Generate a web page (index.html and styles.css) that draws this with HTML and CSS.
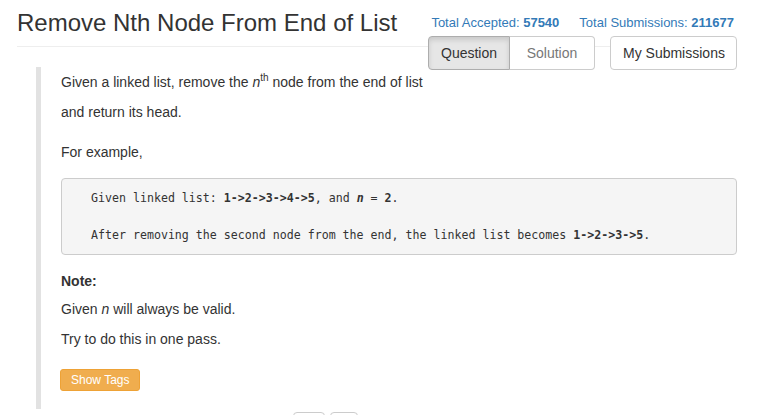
FILE: index.html
```html
<!DOCTYPE html>
<html>
<head>
<meta charset="utf-8">
<link rel="stylesheet" href="styles.css">
</head>
<body>
<div class="page">
  <header class="header">
    <h3 class="title">Remove Nth Node From End of List</h3>
    <div class="side">
      <div class="stats">
        <span class="stat">Total Accepted: <b>57540</b></span>
        <span class="stat">Total Submissions: <b>211677</b></span>
      </div>
      <div class="actions">
        <div class="btn-group">
          <span class="btn active">Question</span>
          <span class="btn muted">Solution</span>
        </div>
        <span class="btn">My Submissions</span>
      </div>
    </div>
  </header>
  <section class="question">
    <p>Given a linked list, remove the <i>n</i><sup>th</sup> node from the end of list</p>
    <p>and return its head.</p>
    <p class="gap">For example,</p>
<pre class="code">Given linked list: <b>1-&gt;2-&gt;3-&gt;4-&gt;5</b>, and <b><i>n</i></b> = <b>2</b>.

After removing the second node from the end, the linked list becomes <b>1-&gt;2-&gt;3-&gt;5</b>.</pre>
    <p class="note"><b>Note:</b></p>
    <p>Given <i>n</i> will always be valid.</p>
    <p>Try to do this in one pass.</p>
    <span class="tags">Show Tags</span>
  </section>
  <div class="pager">
    <span class="pg pg1"></span>
    <span class="pg pg2"></span>
  </div>
</div>
</body>
</html>
```

FILE: styles.css
```css
html, body {
  margin: 0;
  padding: 0;
  background: #fff;
}
body {
  font-family: "Liberation Sans", Arial, Helvetica, sans-serif;
  color: #333;
  font-size: 14px;
  height: 415px;
  overflow: hidden;
}
.page {
  width: 720px;
  padding-left: 17px;
}
.header {
  display: flex;
  justify-content: space-between;
  align-items: flex-start;
  height: 46px;
  border-bottom: 1px solid #eee;
}
.title {
  margin: 8px 0 0 0;
  font-size: 24px;
  font-weight: normal;
  line-height: 30px;
  color: #333;
}
.side {
  display: flex;
  flex-direction: column;
  align-items: flex-end;
}
.stats {
  display: flex;
  gap: 20px;
  margin-top: 14px;
  margin-right: 3px;
  font-size: 13px;
  line-height: 17px;
  color: #337ab7;
}
.stats b {
  font-weight: bold;
}
.actions {
  display: flex;
  gap: 15px;
  margin-top: 5px;
  position: relative;
}
.btn-group {
  display: flex;
}
.btn {
  display: inline-block;
  box-sizing: border-box;
  height: 34px;
  line-height: 32px;
  padding: 0 12px;
  border: 1px solid #ccc;
  border-radius: 4px;
  background: #fff;
  color: #333;
  font-size: 14px;
  white-space: nowrap;
}
.actions > .btn {
  width: 127px;
  text-align: center;
}
.btn-group .btn.active {
  border-radius: 4px 0 0 4px;
  background: #e6e6e6;
  border-color: #adadad;
  box-shadow: inset 0 3px 5px rgba(0,0,0,0.125);
  width: 82px;
  text-align: center;
}
.btn-group .btn.muted {
  border-radius: 0 4px 4px 0;
  border-left: none;
  color: #777;
  width: 85px;
  text-align: center;
}
.question {
  margin: 20px 0 0 19px;
  padding: 5px 0 18px 20px;
  border-left: 5px solid #e2e2e2;
}
.question p {
  margin: 0 0 10px 0;
  line-height: 20px;
}
.question p.gap {
  margin-top: 20px;
}
.question sup {
  font-size: 10px;
  line-height: 0;
  vertical-align: 6px;
}
.code {
  margin: 16px 0 16px 0;
  padding: 9.5px 9.5px 9.5px 29px;
  background: #f5f5f5;
  border: 1px solid #ccc;
  border-radius: 4px;
  font-family: "DejaVu Sans Mono", Consolas, monospace;
  font-size: 11.628px;
  line-height: 18.57px;
  color: #333;
  white-space: pre;
}
.code b {
  font-weight: bold;
}
.question p.note {
  margin-bottom: 8px;
}
.tags {
  display: inline-block;
  margin-top: 10px;
  padding: 0 10px;
  height: 22px;
  line-height: 21px;
  box-sizing: border-box;
  background: #f0ad4e;
  border: 1px solid #eea236;
  border-radius: 3px;
  color: #fff;
  font-size: 12px;
  margin-left: -1px;
}
.pager {
  display: flex;
  gap: 5px;
  margin: 3px 0 0 276px;
}
.pg {
  display: block;
  height: 20px;
  border: 1px solid #ccc;
  border-radius: 4px;
}
.pg1 { width: 30px; }
.pg2 { width: 26px; }
```
